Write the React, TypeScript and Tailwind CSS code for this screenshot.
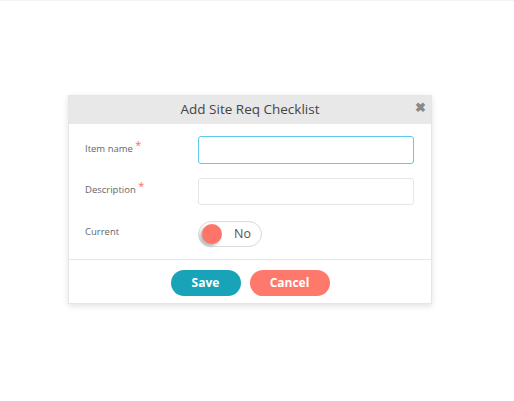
import React, { useState } from 'react';

export default function App() {
  const [name, setName] = useState('');
  const [desc, setDesc] = useState('');
  const [current, setCurrent] = useState(false);

  return (
    <div className="w-[514px] h-[401px] bg-white border-t border-[#f3f3f3] font-['Open_Sans',sans-serif]">
      <div className="pt-[94px] pl-[68px]">
        <div className="w-[364px] bg-white border border-[#e6e6e6] shadow-[0_2px_6px_rgba(0,0,0,0.12)]">
          <div className="relative h-[28px] bg-[#e8e8e8] flex items-center justify-center">
            <h2 className="text-[13.5px] text-[#444] leading-none">Add Site Req Checklist</h2>
            <span className="absolute right-[5px] top-[5px] text-[#8a8a8a] text-[13px] font-bold leading-none">✖</span>
          </div>

          <div className="pl-[16px] pr-[17px] pt-[12px] pb-[12px] flex flex-col gap-[14px]">
            <div className="flex items-center">
              <label className="w-[113px] text-[9.5px] text-[#666] pb-[4px]">
                Item name <span className="relative -top-[3px] text-[11px] text-[#ff6b5e]">*</span>
              </label>
              <input
                className="flex-1 h-[28px] rounded-[3px] border border-[#5cc9ef] outline-none px-2 text-[11px]"
                value={name}
                onChange={(e) => setName(e.target.value)}
              />
            </div>
            <div className="flex items-center">
              <label className="w-[113px] text-[9.5px] text-[#666] pb-[4px]">
                Description <span className="relative -top-[3px] text-[11px] text-[#ff6b5e]">*</span>
              </label>
              <input
                className="flex-1 h-[27px] rounded-[3px] border border-[#e6e6e6] outline-none px-2 text-[11px]"
                value={desc}
                onChange={(e) => setDesc(e.target.value)}
              />
            </div>
            <div className="flex items-center pt-[2px]">
              <label className="w-[113px] text-[9.5px] text-[#666] pb-[4px]">Current</label>
              <button
                onClick={() => setCurrent(!current)}
                className="w-[64px] h-[26px] rounded-full border border-[#dcdcdc] bg-white flex items-center pl-[3px] pr-[10px] shadow-[inset_0_0_2px_rgba(0,0,0,0.06)]"
              >
                <span className="w-[20px] h-[20px] rounded-full bg-[#ff7468] shadow-[-2px_2px_3px_rgba(0,0,0,0.3)]" />
                <span className="ml-auto text-[12.5px] text-[#555]">{current ? 'Yes' : 'No'}</span>
              </button>
            </div>
          </div>

          <div className="border-t border-[#e6e6e6] flex justify-center gap-[9px] pt-[10px] pb-[7px]">
            <button className="w-[70px] h-[26px] rounded-full bg-[#18a3b8] text-white text-[12px] font-bold">Save</button>
            <button className="w-[80px] h-[26px] rounded-full bg-[#ff786c] text-white text-[12px] font-bold">Cancel</button>
          </div>
        </div>
      </div>
    </div>
  );
}
